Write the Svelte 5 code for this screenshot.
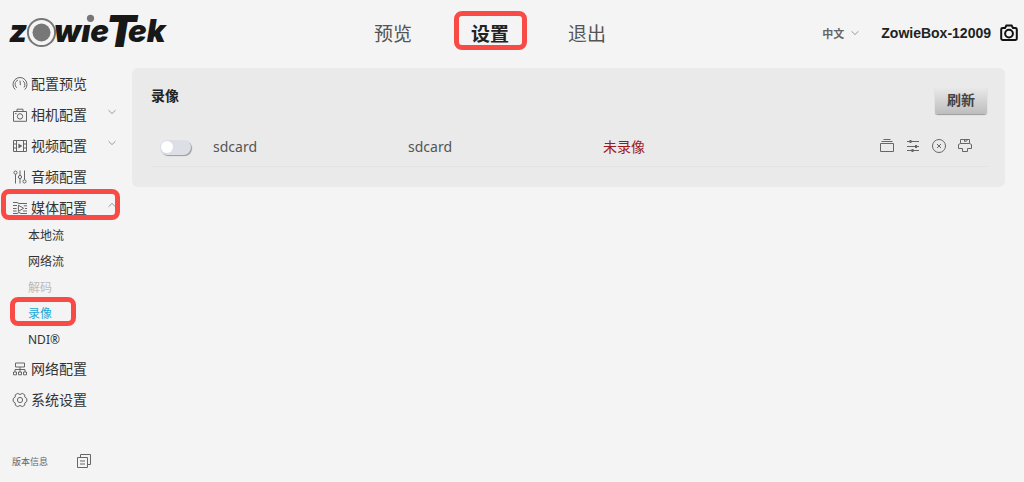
<script lang="ts">
	type Item = { id: string; label: string; arrow?: boolean };

	const tabs = ['预览', '设置', '退出'];
	const menu: Item[] = [
		{ id: 'gauge', label: '配置预览' },
		{ id: 'camera', label: '相机配置', arrow: true },
		{ id: 'video', label: '视频配置', arrow: true },
		{ id: 'audio', label: '音频配置' },
		{ id: 'media', label: '媒体配置', arrow: true },
		{ id: 'network', label: '网络配置' },
		{ id: 'system', label: '系统设置' }
	];
	const mediaPages = ['本地流', '网络流', '解码', '录像', 'NDI®'];
	const actions = [
		{ id: 'files', label: '文件' },
		{ id: 'sliders', label: '参数' },
		{ id: 'close', label: '卸载' },
		{ id: 'format', label: '格式化' }
	];

	let activeTab = $state('设置');
	let openMenu = $state('media');
	let activePage = $state('录像');
	let recording = $state(false);
</script>

{#snippet icon(id: string)}
	<svg class="icon" width="16" height="16" viewBox="0 0 16 16" aria-hidden="true">
		{#if id === 'gauge'}
			<path d="M3.2 13.6A7 7 0 1 1 12.8 13.6M4.8 11.8A4.6 4.6 0 0 1 6 4M10.8 4.8A4.6 4.6 0 0 1 12 11.4M8 4.6L8.4 9.2" />
		{:else if id === 'camera'}
			<path d="M1.5 4.5H14.5V14.3H1.5ZM5 4.5V2.2H11V4.5M3 6.6H4.6" />
			<circle cx="8" cy="9.4" r="2.7" />
		{:else if id === 'video'}
			<path d="M1.5 2.5H14.5V13.5H1.5ZM4.5 2.5V13.5M11.5 2.5V13.5M1.5 6H4.5M1.5 10H4.5M11.5 6H14.5M11.5 10H14.5" />
			<path class="solid" d="M6.4 5.4L10.4 8L6.4 10.6Z" />
		{:else if id === 'audio'}
			<path d="M3.5 5.2V14.5M8 1.5V6.4M8 9.6V14.5M12.5 1.5V10.8" />
			<circle cx="3.5" cy="3.6" r="1.6" />
			<circle cx="8" cy="8" r="1.6" />
			<circle cx="12.5" cy="12.4" r="1.6" />
		{:else if id === 'media'}
			<path d="M1 2.5H5L7 3.5H15M1 5.5H5M11.8 5.8H15M1 8.5H4.6M13 8.5H15M1 11H4.6M11 11H15M1 13.5H5L7 12.5L9 13.5H15M6.4 5.2L11.6 8.3L6.4 11.4Z" />
		{:else if id === 'network'}
			<path d="M3.5 2H12.5V6H3.5ZM8 6V8.5M3 11V8.5H13V11M8 8.5V11M1.5 11H4.5V13.8H1.5ZM6.5 11H9.5V13.8H6.5ZM11.5 11H14.5V13.8H11.5Z" />
		{:else if id === 'system'}
			<path d="M5.7 1.4L8 2.5L10.3 1.4L12.7 2.8L12.8 5.1L14.8 6.5V9.5L12.8 10.9L12.7 13.2L10.3 14.6L8 13.5L5.7 14.6L3.3 13.2L3.2 10.9L1.2 9.5V6.5L3.2 5.1L3.3 2.8Z" />
			<circle cx="8" cy="8" r="2.6" />
		{:else if id === 'files'}
			<path d="M1.5 5.5H14.5V13.5H1.5ZM2.5 3.5H13.5M4.5 1.5H11.5" />
		{:else if id === 'sliders'}
			<path d="M2 3.5H14M2 8.5H14M2 12.5H14" />
			<path class="solid" d="M4.5 2H6.5V5H4.5ZM10 7H12V10H10ZM6.5 11H8.5V14H6.5Z" />
		{:else if id === 'close'}
			<circle cx="8" cy="8" r="6.5" />
			<path d="M6 6L10 10M10 6L6 10" />
		{:else if id === 'format'}
			<path d="M3.5 5.5V1.5H12.5V5.5M3.5 5.5H12.5L14.5 6.5V10.5H10.5V13.5H5.5V10.5H1.5V6.5ZM7.5 1.5V3.5L10 2.8V1.5" />
		{:else if id === 'copy'}
			<path d="M4.5 4V1.5H14.5V11.5H12M1.5 4.5H11.5V14.5H1.5ZM4 8H9M4 11H9" />
		{/if}
	</svg>
{/snippet}

{#snippet chevron(up: boolean)}
	<svg class="chevron" width="8" height="8" viewBox="0 0 8 8" aria-hidden="true">
		<path d={up ? 'M0.5 5.8L4 2.4L7.5 5.8' : 'M0.5 2.2L4 5.6L7.5 2.2'} />
	</svg>
{/snippet}

<div class="page">
	<header>
		<a class="logo" href="/" aria-label="ZowieTek">
			<svg width="180" height="60" viewBox="0 0 180 60">
				<text x="9" y="42" font-size="31">z</text>
				<circle class="ring" cx="41.5" cy="32.5" r="13.6" />
				<circle class="gray" cx="41.5" cy="32.5" r="9" />
				<text y="42" font-size="31">
					<tspan x="54">wıe</tspan><tspan x="106" y="47" font-size="44">T</tspan><tspan x="128" y="42">ek</tspan>
				</text>
				<circle class="gray" cx="90.5" cy="18.3" r="3.6" />
			</svg>
		</a>

		<nav class="tabs">
			{#each tabs as tab}
				<button type="button" class:active={activeTab === tab} onclick={() => (activeTab = tab)}>
					{tab}
				</button>
			{/each}
		</nav>

		<div class="tools">
			<button type="button" class="language">中文 {@render chevron(false)}</button>
			<strong>ZowieBox-12009</strong>
			<button type="button" class="snapshot" aria-label="截图">
				<svg width="18" height="18" viewBox="0 0 18 18">
					<path d="M2.6 4H5L6.4 1.6H11.6L13 4H15.4Q16.8 4 16.8 5.4V14.6Q16.8 16 15.4 16H2.6Q1.2 16 1.2 14.6V5.4Q1.2 4 2.6 4Z" />
					<circle cx="9" cy="9.6" r="3.9" />
				</svg>
			</button>
		</div>
	</header>

	<div class="body">
		<aside>
			<ul class="menu">
				{#each menu as item}
					<li>
						<button
							type="button"
							class="entry"
							class:open={openMenu === item.id}
							onclick={() => (openMenu = openMenu === item.id ? '' : item.id)}
						>
							{@render icon(item.id)}
							<span>{item.label}</span>
							{#if item.arrow}{@render chevron(openMenu === item.id)}{/if}
						</button>
						{#if item.id === 'media' && openMenu === 'media'}
							<ul class="submenu">
								{#each mediaPages as page}
									<li>
										<button
											type="button"
											disabled={page === '解码'}
											class:active={activePage === page}
											onclick={() => (activePage = page)}
										>
											{page}
										</button>
									</li>
								{/each}
							</ul>
						{/if}
					</li>
				{/each}
			</ul>
			<div class="version">
				<span>版本信息</span>
				<button type="button" aria-label="版本信息">{@render icon('copy')}</button>
			</div>
		</aside>

		<main>
			<section>
				<div class="heading">
					<h1>录像</h1>
					<button type="button" class="refresh">刷新</button>
				</div>
				<div class="record">
					<input type="checkbox" role="switch" aria-label="录像 sdcard" bind:checked={recording} />
					<span>sdcard</span>
					<span>sdcard</span>
					<span class="status">未录像</span>
					<div class="actions">
						{#each actions as action}
							<button type="button" aria-label={action.label}>{@render icon(action.id)}</button>
						{/each}
					</div>
				</div>
			</section>
		</main>
	</div>
</div>

<style>
	:global(body) {
		background: #f4f4f4;
	}

	.page {
		--mark: #f94b46;

		display: flex;
		flex-direction: column;
		min-height: 100vh;
		color: #333;
		font-family: 'Noto Sans', 'Noto Sans CJK SC', sans-serif;
		font-size: 14px;
	}

	button {
		padding: 0;
		border: none;
		background: none;
		color: inherit;
		font: inherit;
		cursor: pointer;
	}

	ul {
		margin: 0;
		padding: 0;
		list-style: none;
	}

	svg {
		display: block;
		flex: none;
		fill: none;
		stroke: currentColor;
	}

	.icon .solid {
		fill: currentColor;
		stroke: none;
	}

	.chevron {
		color: #999;
	}

	header {
		display: grid;
		grid-template-columns: 1fr auto 1fr;
		align-items: center;
		height: 68px;
		padding-right: 6px;
	}

	.logo {
		align-self: start;
		justify-self: start;
	}

	.logo svg {
		fill: #181818;
		stroke: none;
	}

	.logo text {
		font-family: Inter, Roboto, sans-serif;
		font-style: italic;
		font-weight: 900;
	}

	.logo .ring {
		fill: none;
		stroke: #777;
		stroke-width: 2;
	}

	.logo .gray {
		fill: #777;
	}

	.tabs {
		display: flex;
		gap: 24px;
		/* the tabs sit left of the centre line */
		margin-right: 38px;
	}

	.tabs button {
		position: relative;
		width: 73px;
		height: 40px;
		padding-bottom: 2px;
		color: #555;
		font-size: 19px;
	}

	.tabs .active {
		color: #222;
		font-weight: 700;
	}

	.tabs .active::after,
	.entry.open::after,
	.submenu .active::after {
		content: '';
		position: absolute;
		border: 5px solid var(--mark);
		border-radius: 8px;
		pointer-events: none;
	}

	.tabs .active::after {
		inset: -3px 0 4px;
	}

	.tools {
		display: flex;
		align-items: center;
		justify-content: flex-end;
		padding-bottom: 2px;
		color: #222;
	}

	.language {
		display: flex;
		align-items: center;
		gap: 7px;
		margin-right: 22px;
		color: #666;
		font-size: 11px;
		font-weight: 700;
	}

	.tools strong {
		margin-right: 9px;
		font-family: 'Liberation Sans', Arial, sans-serif;
	}

	.snapshot svg {
		color: #111;
		stroke-width: 2;
	}

	.body {
		display: flex;
		flex: 1;
	}

	aside {
		display: flex;
		flex-direction: column;
		flex: none;
		width: 132px;
	}

	.entry {
		position: relative;
		display: flex;
		align-items: center;
		gap: 3px;
		width: 100%;
		height: 31px;
		padding: 0 16px 2px 12px;
	}

	.icon {
		color: #666;
	}

	.entry .icon {
		margin-top: 2px;
	}

	.entry .chevron {
		margin: 0 0 3px auto;
	}

	.entry.open::after {
		inset: -3px 12px 3px 1px;
	}

	.submenu li {
		height: 26px;
	}

	.submenu button {
		position: relative;
		display: block;
		margin-left: 28px;
		font-size: 12px;
		line-height: 26px;
	}

	.submenu button:disabled {
		color: #bbb;
		cursor: default;
	}

	.submenu .active {
		color: #21a9d6;
	}

	.submenu .active::after {
		inset: -4px -24px 1px -18px;
	}

	.version {
		display: flex;
		align-items: center;
		gap: 28px;
		margin-top: auto;
		padding: 0 0 13px 12px;
		color: #666;
		font-size: 9px;
	}

	main {
		flex: 1;
		min-width: 0;
		padding-right: 19px;
	}

	section {
		padding: 18px 18px 20px 19px;
		border-radius: 6px;
		background: #eaeaea;
	}

	.heading {
		display: flex;
		align-items: flex-start;
		justify-content: space-between;
		height: 40px;
	}

	h1 {
		margin: 0;
		color: #222;
		font-size: 14px;
		line-height: 20px;
	}

	.refresh {
		width: 52px;
		height: 28px;
		padding-bottom: 2px;
		border-radius: 3px;
		background: linear-gradient(#ececec, #bdbdbd);
		box-shadow: 0 1px 1px #999;
		color: #444;
		font-weight: 700;
	}

	.record {
		display: grid;
		grid-template-columns: 62px 195px 195px 1fr auto;
		align-items: center;
		height: 40px;
		border-bottom: 1px solid #e3e3e3;
		color: #555;
	}

	.record input {
		appearance: none;
		display: flex;
		width: 31px;
		height: 15px;
		margin: 2px 0 0 9px;
		padding: 1px;
		box-sizing: border-box;
		border-radius: 8px;
		background: #dcdfe6;
		box-shadow: 1px 1px 1px #999;
		cursor: pointer;
	}

	.record input::before {
		content: '';
		width: 12px;
		height: 12px;
		border-radius: 50%;
		background: #fff;
	}

	.record input:checked {
		justify-content: flex-end;
		background: #21a9d6;
	}

	.status {
		color: #a01818;
	}

	.actions {
		display: flex;
		gap: 10px;
		padding-right: 14px;
	}
</style>
